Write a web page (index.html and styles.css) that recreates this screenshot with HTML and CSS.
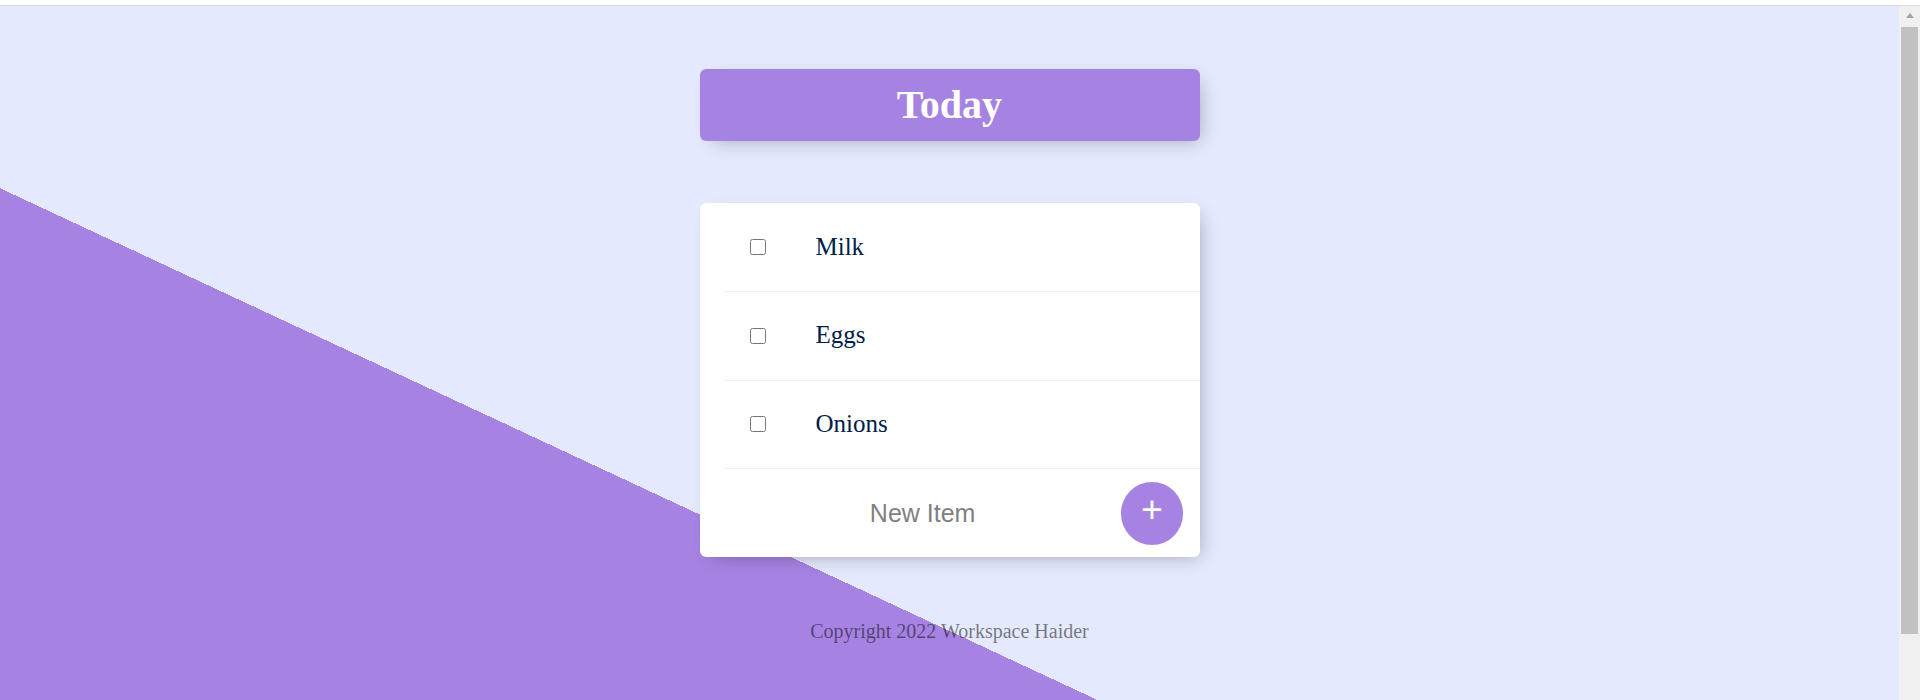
FILE: index.html
```html
<!DOCTYPE html>
<html lang="en">
<head>
<meta charset="utf-8">
<title>To-Do List</title>
<link rel="stylesheet" href="styles.css">
</head>
<body>
<div class="chrome"></div>
<div class="frame">
  <div class="page">
    <div class="box heading"><h1>Today</h1></div>
    <div class="box list">
      <form class="item"><input type="checkbox" class="check"><p>Milk</p></form>
      <form class="item"><input type="checkbox" class="check"><p>Eggs</p></form>
      <form class="item"><input type="checkbox" class="check"><p>Onions</p></form>
      <form class="item add"><input type="text" class="new-item" placeholder="New Item" autocomplete="off"><button type="button" class="add-btn">+</button></form>
    </div>
    <footer class="footer">Copyright 2022 Workspace Haider</footer>
  </div>
  <div class="scrollbar">
    <div class="arrow-btn"><span class="arrow"></span></div>
    <div class="thumb"></div>
  </div>
</div>
</body>
</html>
```

FILE: styles.css
```css
html, body {
  margin: 0;
  padding: 0;
  height: 700px;
  overflow: hidden;
}

body {
  display: flex;
  flex-direction: column;
  font-family: "Liberation Serif", "Times New Roman", serif;
  background: #ffffff;
}

.chrome {
  height: 5px;
  flex: none;
  background: #ffffff;
  border-bottom: 1px solid #dadada;
}

.frame {
  flex: 1;
  display: flex;
  min-height: 0;
}

.page {
  flex: 1;
  min-width: 0;
  overflow: hidden;
  background-color: #E4E9FD;
  background-image: linear-gradient(25deg, #A683E3 50%, #E4E9FD 50%);
  background-size: 100% 1250px;
  background-repeat: no-repeat;
}

.box {
  width: 500px;
  margin: 62.5px auto;
  background: #ffffff;
  border-radius: 6.25px;
  box-shadow: 6.25px 6.25px 18.75px -6.25px rgba(0, 0, 0, 0.3);
}

.heading {
  background-color: #A683E3;
  text-align: center;
  padding: 12.5px;
  box-sizing: border-box;
}

.heading h1 {
  margin: 0;
  color: #ffffff;
  font-size: 40px;
  line-height: 47px;
  font-weight: bold;
}

.item {
  min-height: 87.8px;
  display: flex;
  align-items: center;
  border-bottom: 1px solid #F1F1F1;
  margin: 0 0 0 25px;
  text-align: center;
}

.item.add {
  border-bottom: 0;
}

.check {
  width: 16px;
  height: 16px;
  margin: 25px;
  flex: none;
}

.item p {
  margin: 0;
  padding: 25px;
  font-size: 25px;
  line-height: 28.75px;
  font-weight: 200;
  color: #00204a;
}

.new-item {
  text-align: center;
  height: 75px;
  width: 391.25px;
  padding: 2.5px 2.5px;
  margin: 0;
  border: none;
  background: transparent;
  font-family: "Liberation Sans", Arial, sans-serif;
  font-size: 25px;
  font-weight: 200;
  color: #000;
  outline: none;
}

.new-item::placeholder {
  color: grey;
  opacity: 1;
}

.add-btn {
  min-height: 62.5px;
  width: 62.5px;
  height: 62.5px;
  border-radius: 50%;
  border: 0;
  background-color: #A683E3;
  color: #ffffff;
  font-family: "Liberation Sans", Arial, sans-serif;
  font-size: 37.5px;
  line-height: 1;
  padding: 0 0 7.5px 0;
  margin: 0;
  flex: none;
}

.footer {
  color: rgba(0, 0, 0, 0.5);
  text-align: center;
  font-size: 20px;
  line-height: 23px;
}

.scrollbar {
  width: 21px;
  flex: none;
  background: #f0f0f0;
  display: flex;
  flex-direction: column;
  align-items: center;
}

.arrow-btn {
  height: 19px;
  width: 17px;
  display: flex;
  align-items: center;
  justify-content: center;
}

.arrow {
  width: 0;
  height: 0;
  border-left: 4.5px solid transparent;
  border-right: 4.5px solid transparent;
  border-bottom: 5px solid #a3a3a3;
}

.thumb {
  margin-top: 2px;
  width: 17px;
  height: 607px;
  background: #c1c1c1;
}
```
